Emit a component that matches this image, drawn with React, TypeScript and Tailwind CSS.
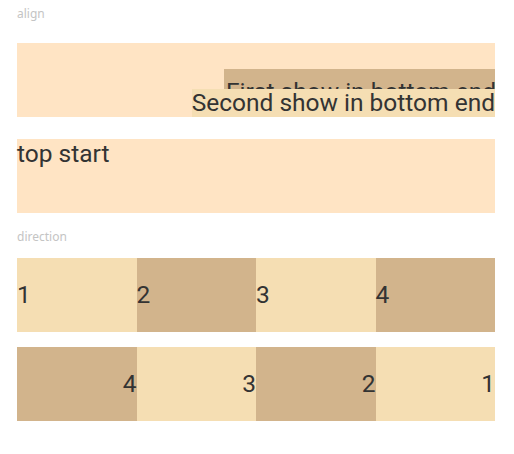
const font = "font-['Roboto','Liberation_Sans',sans-serif]"

const Label = ({ text }: { text: string }) => (
  <div className="h-[16px] text-[12px] leading-[16px] text-[#c4c4c4] font-['Noto_Sans',sans-serif]">{text}</div>
)

const Cell = ({ n, dark, end }: { n: number; dark: boolean; end?: boolean }) => (
  <div
    className={`flex-1 h-full flex items-center ${end ? 'justify-end' : 'justify-start'} ${
      dark ? 'bg-[#D2B48C]' : 'bg-[#F5DEB3]'
    }`}
  >
    {n}
  </div>
)

export default function App() {
  return (
    <div className={`w-[514px] h-[454px] bg-white px-[17px] pt-[6px] ${font} text-[#333333]`}>
      <Label text="align" />

      {/* bottom end stack */}
      <div className="mt-[21px] w-[478px] h-[74px] bg-[#FFE4C4] flex flex-col items-end justify-end text-[24.5px]">
        <div className="w-[271px] h-[48px] bg-[#D2B48C] overflow-hidden whitespace-nowrap pt-[9px] leading-[28px]">
          <span className="pl-[2px]">First show in bottom end</span>
        </div>
        <div className="-mt-[28px] h-[28px] bg-[#F5DEB3] whitespace-nowrap flex items-center relative">
          Second show in bottom end
        </div>
      </div>

      {/* top start stack */}
      <div className="mt-[22px] w-[478px] h-[74px] bg-[#FFE4C4] text-[24.5px] leading-[30px]">top start</div>

      <div className="mt-[16px]">
        <Label text="direction" />
      </div>

      <div className="mt-[13px] w-[478px] h-[74px] flex text-[24.5px]">
        <Cell n={1} dark={false} />
        <Cell n={2} dark />
        <Cell n={3} dark={false} />
        <Cell n={4} dark />
      </div>

      <div className="mt-[15px] w-[478px] h-[74px] flex text-[24.5px]">
        <Cell n={4} dark end />
        <Cell n={3} dark={false} end />
        <Cell n={2} dark end />
        <Cell n={1} dark={false} end />
      </div>
    </div>
  )
}
